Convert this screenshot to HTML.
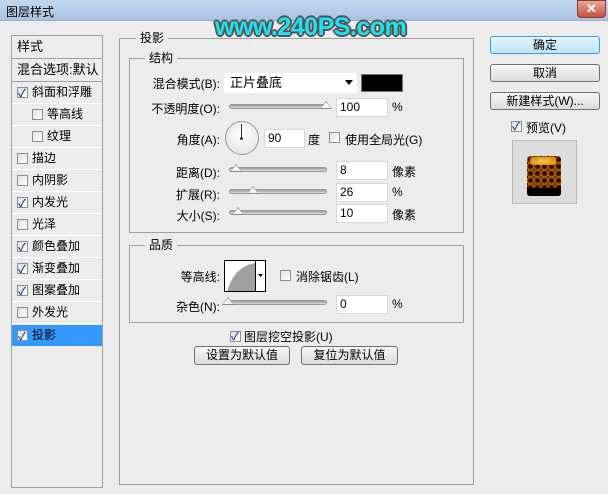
<!DOCTYPE html><html><head><meta charset="utf-8"><style>
*{margin:0;padding:0;box-sizing:border-box}
body{width:608px;height:494px;background:#ececec;position:relative;overflow:hidden;font-family:"Liberation Sans","Noto Sans CJK SC",sans-serif;font-size:12px;color:#000}
.a{position:absolute;white-space:nowrap}
.tb{left:0;top:0;width:608px;height:21px;background:linear-gradient(#c3d6ee,#a9c3e3);border-bottom:1px solid #98b1cc}
.cb{position:absolute;width:11px;height:11px;border:1px solid #8e8f8f;background:linear-gradient(135deg,#e0e0e0,#fff)}
.cb.k::after{content:"✓";position:absolute;left:0;top:-4px;font-size:11px;color:#2c4b9a;font-weight:bold}
.row{position:absolute;left:12px;width:90px;height:22px;border-bottom:1px solid #fff;line-height:21px}
.grp{position:absolute;border:1px solid #a0a0a0;}
.lg{position:absolute;background:#ececec;padding:0 4px;line-height:14px}
.inp{position:absolute;background:#fff;border:1px solid #d8d8d8;height:19px;line-height:17px;padding-left:3px}
.sl{position:absolute;height:5px;border-radius:3px;background:linear-gradient(#999,#ddd);border:1px solid #9a9a9a}
.th{position:absolute;width:0;height:0;border-left:6px solid transparent;border-right:6px solid transparent;border-bottom:8px solid #888}
.th::after{content:"";position:absolute;left:-5px;top:1px;border-left:5px solid transparent;border-right:5px solid transparent;border-bottom:6px solid #f4f4f4}
.btn{position:absolute;border:1px solid #707070;border-radius:3px;background:linear-gradient(#f6f6f6,#dcdcdc);text-align:center;line-height:17px}
.r{text-align:right}
</style></head><body>
<div class="a tb"></div>
<div class="a" style="left:6px;top:3px;font-size:12px">图层样式</div>
<div class="a" style="left:577px;top:0;width:29px;height:18px;border:1px solid #8a3a32;border-radius:0 0 4px 4px;background:linear-gradient(#e8a89c,#c8503f);color:#fff;font-weight:bold;text-align:center;line-height:16px;font-size:13px">✕</div>
<div class="a" style="left:215px;top:13px;font-size:25px;font-weight:bold;color:#1fe0f0;letter-spacing:-0.5px;text-shadow:-2px 0 #555,2px 0 #555,0 -2px #555,0 2px #555,-1px -1px #555,1px 1px #555,-1px 1px #555,1px -1px #555">www.240PS.com</div>

<div class="a" style="left:11px;top:35px;width:92px;height:453px;border:1px solid #a0a0a0"></div>
<div class="row" style="top:36px;padding-left:5px;height:23px;border-bottom:1px solid #a0a0a0;font-size:13px">样式</div>
<div class="row" style="top:59px;padding-left:5px;height:23px;border-bottom:1px solid #a0a0a0;font-size:13px">混合选项:默认</div>
<div class="row" style="top:82px;padding-left:20px"><span class="cb k" style="left:5px;top:5px"></span>斜面和浮雕</div>
<div class="row" style="top:104px;padding-left:35px"><span class="cb" style="left:20px;top:5px"></span>等高线</div>
<div class="row" style="top:126px;padding-left:35px"><span class="cb" style="left:20px;top:5px"></span>纹理</div>
<div class="row" style="top:148px;padding-left:20px"><span class="cb" style="left:5px;top:5px"></span>描边</div>
<div class="row" style="top:170px;padding-left:20px"><span class="cb" style="left:5px;top:5px"></span>内阴影</div>
<div class="row" style="top:192px;padding-left:20px"><span class="cb k" style="left:5px;top:5px"></span>内发光</div>
<div class="row" style="top:214px;padding-left:20px"><span class="cb" style="left:5px;top:5px"></span>光泽</div>
<div class="row" style="top:236px;padding-left:20px"><span class="cb k" style="left:5px;top:5px"></span>颜色叠加</div>
<div class="row" style="top:258px;padding-left:20px"><span class="cb k" style="left:5px;top:5px"></span>渐变叠加</div>
<div class="row" style="top:280px;padding-left:20px"><span class="cb k" style="left:5px;top:5px"></span>图案叠加</div>
<div class="row" style="top:302px;padding-left:20px"><span class="cb" style="left:5px;top:5px"></span>外发光</div>
<div class="row" style="top:325px;padding-left:20px;background:#3399ff;border:none;height:21px"><span class="cb k" style="left:5px;top:5px"></span>投影</div>

<div class="grp" style="left:119px;top:38px;width:355px;height:447px"></div>
<div class="lg" style="left:136px;top:31px">投影</div>
<div class="grp" style="left:129px;top:58px;width:335px;height:175px"></div>
<div class="lg" style="left:145px;top:51px">结构</div>

<div class="a r" style="left:130px;top:75px;width:90px">混合模式(B):</div>
<div class="inp" style="left:224px;top:73px;width:133px;height:20px;line-height:19px;padding-left:6px;font-size:13px;border:none">正片叠底</div>
<div class="a" style="left:345px;top:80px;border-left:4px solid transparent;border-right:4px solid transparent;border-top:5px solid #000"></div>
<div class="a" style="left:361px;top:74px;width:42px;height:18px;background:#000;border:1px solid #777"></div>

<div class="a r" style="left:130px;top:100px;width:90px">不透明度(O):</div>
<div class="sl" style="left:229px;top:104px;width:98px"></div><div class="th" style="left:320px;top:101px"></div>
<div class="inp" style="left:336px;top:98px;width:52px">100</div><div class="a" style="left:392px;top:100px">%</div>

<div class="a r" style="left:130px;top:131px;width:90px">角度(A):</div>
<div class="a" style="left:225px;top:121px;width:34px;height:34px;border-radius:50%;border:1px solid #999;background:radial-gradient(circle at 50% 40%,#fff,#ddd)"></div>
<div class="a" style="left:241px;top:124px;width:1px;height:14px;background:#333"></div>
<div class="a" style="left:240px;top:137px;width:3px;height:3px;background:#333;border-radius:50%"></div>
<div class="inp" style="left:264px;top:129px;width:41px">90</div><div class="a" style="left:308px;top:131px">度</div>
<span class="cb" style="left:329px;top:132px"></span><div class="a" style="left:345px;top:131px">使用全局光(G)</div>

<div class="a r" style="left:130px;top:164px;width:90px">距离(D):</div>
<div class="sl" style="left:229px;top:167px;width:98px"></div><div class="th" style="left:230px;top:164px"></div>
<div class="inp" style="left:336px;top:161px;width:52px">8</div><div class="a" style="left:392px;top:163px">像素</div>
<div class="a r" style="left:130px;top:186px;width:90px">扩展(R):</div>
<div class="sl" style="left:229px;top:189px;width:98px"></div><div class="th" style="left:247px;top:186px"></div>
<div class="inp" style="left:336px;top:183px;width:52px">26</div><div class="a" style="left:392px;top:185px">%</div>
<div class="a r" style="left:130px;top:207px;width:90px">大小(S):</div>
<div class="sl" style="left:229px;top:210px;width:98px"></div><div class="th" style="left:232px;top:207px"></div>
<div class="inp" style="left:336px;top:204px;width:52px">10</div><div class="a" style="left:392px;top:206px">像素</div>

<div class="grp" style="left:129px;top:245px;width:335px;height:78px"></div>
<div class="lg" style="left:145px;top:238px">品质</div>
<div class="a r" style="left:130px;top:268px;width:90px">等高线:</div>
<div class="a" style="left:224px;top:260px;width:42px;height:32px;border:1px solid #000;background:#fff;overflow:hidden">
<svg width="42" height="32" style="position:absolute;left:0;top:0"><path d="M2 32 Q8 6 30 2 L30 32Z" fill="#a0a0a0"/><line x1="30.5" y1="0" x2="30.5" y2="32" stroke="#000"/><path d="M33 13 L38 13 L35.5 16Z" fill="#000"/></svg></div>
<span class="cb" style="left:280px;top:270px"></span><div class="a" style="left:296px;top:268px">消除锯齿(L)</div>
<div class="a r" style="left:130px;top:298px;width:90px">杂色(N):</div>
<div class="sl" style="left:226px;top:300px;width:101px"></div><div class="th" style="left:222px;top:297px"></div>
<div class="inp" style="left:336px;top:295px;width:52px">0</div><div class="a" style="left:392px;top:297px">%</div>

<span class="cb k" style="left:230px;top:331px"></span><div class="a" style="left:244px;top:328px">图层挖空投影(U)</div>
<div class="btn" style="left:194px;top:346px;width:96px;height:19px">设置为默认值</div>
<div class="btn" style="left:301px;top:346px;width:97px;height:19px">复位为默认值</div>

<div class="btn" style="left:490px;top:36px;width:110px;height:18px;border-color:#3c9fd6;background:linear-gradient(#e6f5fc,#bfe3f6)">确定</div>
<div class="btn" style="left:490px;top:64px;width:110px;height:18px">取消</div>
<div class="btn" style="left:490px;top:92px;width:110px;height:18px">新建样式(W)...</div>
<span class="cb k" style="left:511px;top:121px"></span><div class="a" style="left:526px;top:119px">预览(V)</div>
<div class="a" style="left:512px;top:140px;width:65px;height:64px;background:#dcdcdc;border:1px solid #bbb"></div>
<div class="a" style="left:527px;top:156px;width:34px;height:40px;border-radius:3px;background:repeating-radial-gradient(circle at 50% 50%,#2a1200 0 2px,#b05a00 3px 4px);background-size:7px 7px;box-shadow:inset 0 -8px 0 #000"></div>
<div class="a" style="left:530px;top:157px;width:26px;height:8px;background:radial-gradient(#fff060,#f08000);opacity:.85;border-radius:3px"></div>
</body></html>
